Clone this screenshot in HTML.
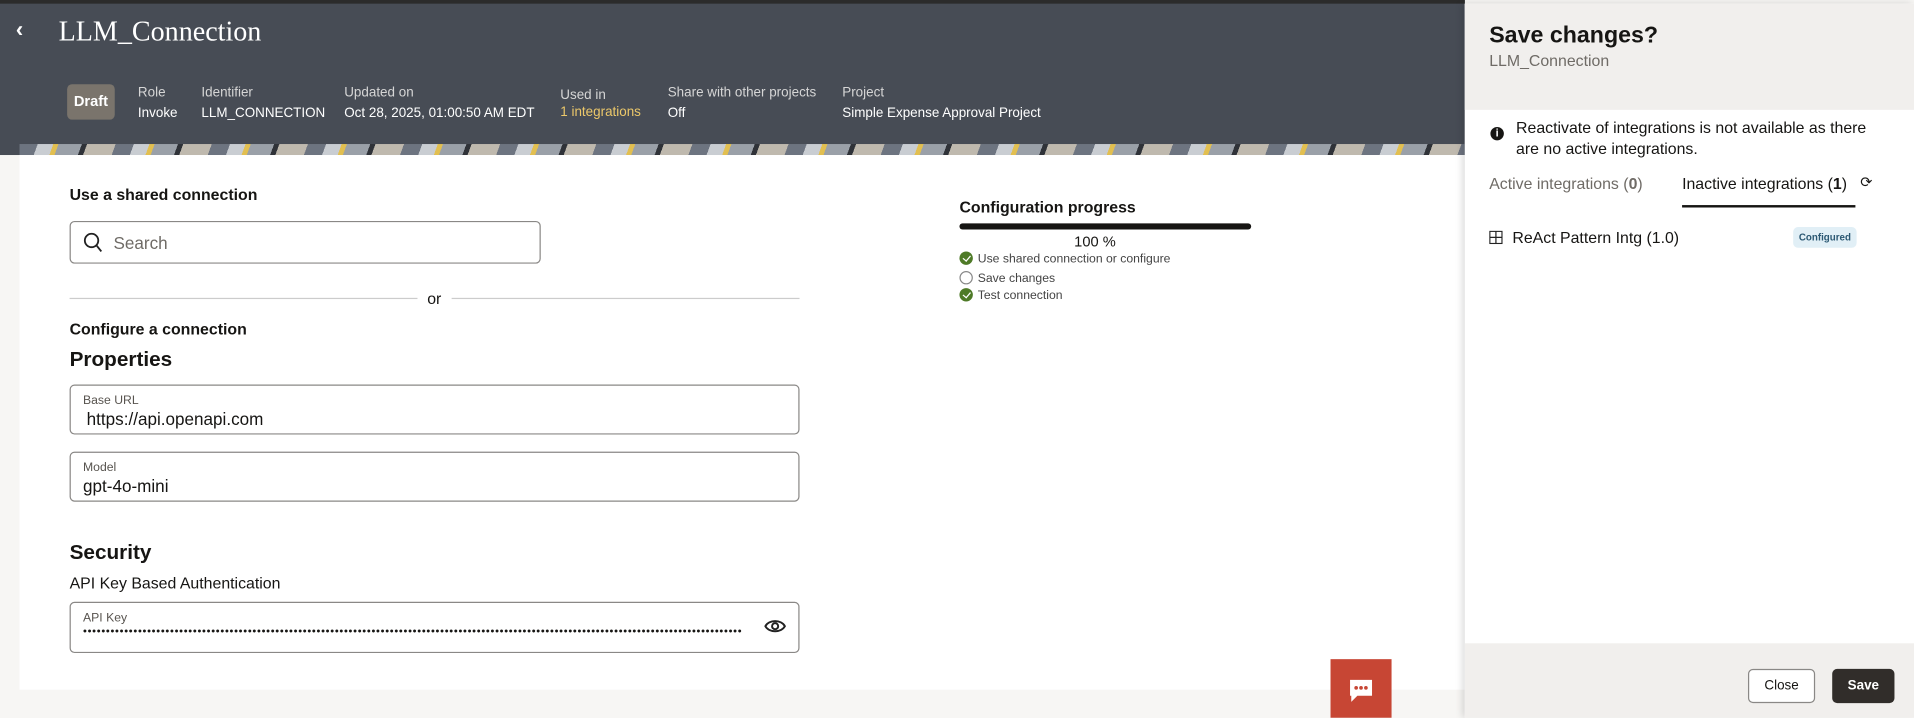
<!DOCTYPE html>
<html><head><meta charset="utf-8"><style>
*{box-sizing:border-box;margin:0;padding:0}
html,body{width:1914px;height:718px;overflow:hidden;background:#f7f6f4;font-family:"Liberation Sans",sans-serif;color:#161513}
#w{position:absolute;left:0;top:0;width:1568px;height:588px;transform:scale(1.22066);transform-origin:0 0}
.a{position:absolute;white-space:nowrap}
.hdr{position:absolute;left:0;top:0;width:1200px;height:127px;background:#474c55;border-top:3px solid #2b2b2b}
.lab{font-size:11px;color:#d6d6d6}
.val{font-size:11px;color:#fff}
.band{position:absolute;left:16px;top:118px;width:1184px;height:9px;background:repeating-linear-gradient(110deg,#6d7480 0 14px,#c9cdd2 14px 26px,#e2bf50 26px 30px,#9aa0a8 30px 48px,#2f3238 48px 52px,#bfb9ae 52px 74px)}
.card{position:absolute;left:16px;top:127px;width:1184px;height:438px;background:#fff}
.box{position:absolute;border:1px solid #8a8886;border-radius:4px;background:#fff}
.fl{font-size:10px;color:#58544f;position:absolute;left:10px;top:7px}
.fv{font-size:14px;position:absolute;left:10px;top:19px}
.chk{display:inline-block;width:11px;height:11px;border-radius:50%;background:#4e7a27;vertical-align:-2px;margin-right:4px;position:relative}
.chk:after{content:"";position:absolute;left:3.5px;top:2px;width:3px;height:5px;border:solid #fff;border-width:0 1.5px 1.5px 0;transform:rotate(40deg)}
.emp{display:inline-block;width:11px;height:11px;border-radius:50%;border:1px solid #888;vertical-align:-2px;margin-right:4px}
</style></head><body><div id="w">
<div class="hdr"></div>
<div class="a" style="left:13px;top:14px;color:#fff;font-size:18px;font-weight:bold">&#8249;</div>
<div class="a" style="left:48px;top:13px;color:#fff;font-size:23px;font-family:'Liberation Serif',serif">LLM_Connection</div>
<div class="a" style="left:55px;top:69px;width:39px;height:29px;background:#7a746c;border-radius:4px;color:#fff;font-size:12px;font-weight:bold;text-align:center;line-height:29px">Draft</div>
<div class="a lab" style="left:113px;top:70px">Role</div><div class="a val" style="left:113px;top:87px">Invoke</div>
<div class="a lab" style="left:165px;top:70px">Identifier</div><div class="a val" style="left:165px;top:87px">LLM_CONNECTION</div>
<div class="a lab" style="left:282px;top:70px">Updated on</div><div class="a val" style="left:282px;top:87px">Oct 28, 2025, 01:00:50 AM EDT</div>
<div class="a lab" style="left:459px;top:72px">Used in</div><div class="a val" style="left:459px;top:86px;color:#ecc86a">1 integrations</div>
<div class="a lab" style="left:547px;top:70px">Share with other projects</div><div class="a val" style="left:547px;top:87px">Off</div>
<div class="a lab" style="left:690px;top:70px">Project</div><div class="a val" style="left:690px;top:87px">Simple Expense Approval Project</div>
<div class="band"></div>
<div class="card"></div>
<div class="a" style="left:57px;top:152px;font-size:13px;font-weight:bold">Use a shared connection</div>
<div class="box" style="left:57px;top:181px;width:386px;height:35px">
<svg class="a" style="left:10px;top:8px" width="16" height="17" viewBox="0 0 16 17"><circle cx="7" cy="7" r="5.5" fill="none" stroke="#222" stroke-width="1.5"/><path d="M11 11l4 5" stroke="#222" stroke-width="1.5"/></svg>
<div class="a" style="left:35px;top:9px;font-size:14px;color:#6f6b66">Search</div></div>
<div class="a" style="left:57px;top:244px;width:285px;height:1px;background:#ccc"></div>
<div class="a" style="left:350px;top:237px;font-size:13px">or</div>
<div class="a" style="left:370px;top:244px;width:285px;height:1px;background:#ccc"></div>
<div class="a" style="left:57px;top:262px;font-size:13px;font-weight:bold">Configure a connection</div>
<div class="a" style="left:57px;top:285px;font-size:17px;font-weight:bold">Properties</div>
<div class="box" style="left:57px;top:315px;width:598px;height:41px"><div class="fl">Base URL</div><div class="fv" style="left:13px">https://api.openapi.com</div></div>
<div class="box" style="left:57px;top:370px;width:598px;height:41px"><div class="fl">Model</div><div class="fv" style="left:10px">gpt-4o-mini</div></div>
<div class="a" style="left:57px;top:443px;font-size:17px;font-weight:bold">Security</div>
<div class="a" style="left:57px;top:470px;font-size:13px">API Key Based Authentication</div>
<div class="box" style="left:57px;top:493px;width:598px;height:42px"><div class="fl">API Key</div>
<div class="a" style="left:10px;top:19px;width:540px;height:8px;overflow:hidden;font-size:9px;letter-spacing:0.6px;line-height:8px">••••••••••••••••••••••••••••••••••••••••••••••••••••••••••••••••••••••••••••••••••••••••••••••••••••••••••••••••••••••••••••••••••••••••••••••••••••••••••••••</div>
<svg class="a" style="left:568px;top:12px" width="18" height="14" viewBox="0 0 18 14"><path d="M1 7C4 1.5 14 1.5 17 7C14 12.5 4 12.5 1 7Z" fill="none" stroke="#222" stroke-width="1.6"/><circle cx="9" cy="7" r="2.5" fill="none" stroke="#222" stroke-width="1.6"/></svg></div>
<div class="a" style="left:786px;top:162px;font-size:13px;font-weight:bold">Configuration progress</div>
<div class="a" style="left:786px;top:183px;width:239px;height:5px;background:#161513;border-radius:3px"></div>
<div class="a" style="left:880px;top:191px;font-size:12px">100 %</div>
<div class="a" style="left:786px;top:206px;font-size:10px;color:#444"><span class="chk"></span>Use shared connection or configure</div>
<div class="a" style="left:786px;top:222px;font-size:10px;color:#444"><span class="emp"></span>Save changes</div>
<div class="a" style="left:786px;top:236px;font-size:10px;color:#444"><span class="chk"></span>Test connection</div>
<div class="a" style="left:1090px;top:540px;width:50px;height:48px;background:#c74634">
<svg class="a" style="left:14px;top:15px" width="22" height="22" viewBox="0 0 22 22"><path d="M2 2h18v13H8l-5 5v-5H2z" fill="#fff"/><circle cx="7" cy="8.5" r="1.5" fill="#c74634"/><circle cx="11" cy="8.5" r="1.5" fill="#c74634"/><circle cx="15" cy="8.5" r="1.5" fill="#c74634"/></svg></div>
<div class="a" style="left:1200px;top:3px;width:368px;height:585px;background:#fff;box-shadow:-2px 0 6px rgba(0,0,0,.15)"></div>
<div class="a" style="left:1200px;top:3px;width:368px;height:87px;background:#f1efed"></div>
<div class="a" style="left:1220px;top:19px;font-size:19px;font-weight:bold">Save changes?</div>
<div class="a" style="left:1220px;top:42px;font-size:13px;color:#6f6b66">LLM_Connection</div>
<div class="a" style="left:1221px;top:104px;width:11px;height:11px;border-radius:50%;background:#161513;color:#fff;font-size:9px;font-weight:bold;text-align:center;line-height:11px">i</div>
<div class="a" style="left:1242px;top:96px;font-size:13px;line-height:17px">Reactivate of integrations is not available as there<br>are no active integrations.</div>
<div class="a" style="left:1220px;top:143px;font-size:13px;color:#6f6b66">Active integrations (<b>0</b>)</div>
<div class="a" style="left:1378px;top:143px;font-size:13px">Inactive integrations (<b>1</b>)</div>
<div class="a" style="left:1524px;top:142px;font-size:12px">&#10227;</div>
<div class="a" style="left:1378px;top:168px;width:142px;height:2px;background:#161513"></div>
<svg class="a" style="left:1220px;top:189px" width="11" height="11" viewBox="0 0 11 11"><rect x=".5" y=".5" width="10" height="10" fill="none" stroke="#222"/><path d="M5.5 .5v10M.5 5.5h10" stroke="#222"/></svg>
<div class="a" style="left:1239px;top:187px;font-size:13px">ReAct Pattern Intg (1.0)</div>
<div class="a" style="left:1469px;top:186px;width:52px;height:17px;background:#e1eff6;border-radius:4px;font-size:8px;font-weight:bold;color:#2b5873;text-align:center;line-height:17px">Configured</div>
<div class="a" style="left:1200px;top:527px;width:368px;height:61px;background:#f1efed"></div>
<div class="a" style="left:1432px;top:548px;width:55px;height:28px;background:#fff;border:1px solid #8a8886;border-radius:4px;font-size:11px;text-align:center;line-height:26px">Close</div>
<div class="a" style="left:1501px;top:548px;width:51px;height:28px;background:#312d2a;border-radius:4px;font-size:11px;color:#fff;font-weight:bold;text-align:center;line-height:28px">Save</div>
</div></body></html>
